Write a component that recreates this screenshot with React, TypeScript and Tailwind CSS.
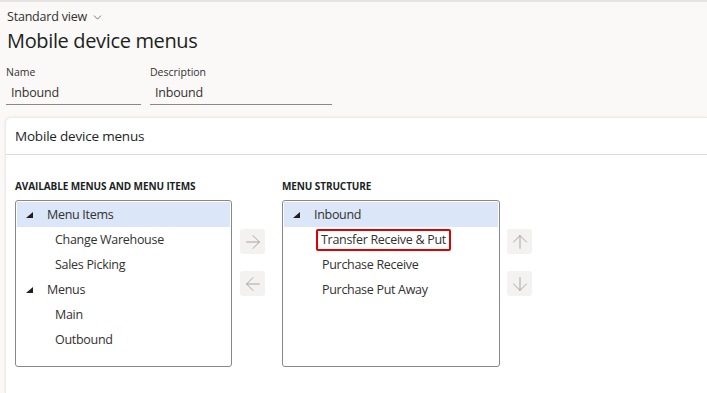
import { ArrowRight, ArrowLeft, ArrowUp, ArrowDown, ChevronDown } from 'lucide-react';

type Row = { label: string; level: 0 | 1; expanded?: boolean; selected?: boolean; marked?: boolean };

const availableRows: Row[] = [
  { label: 'Menu Items', level: 0, expanded: true, selected: true },
  { label: 'Change Warehouse', level: 1 },
  { label: 'Sales Picking', level: 1 },
  { label: 'Menus', level: 0, expanded: true },
  { label: 'Main', level: 1 },
  { label: 'Outbound', level: 1 },
];

const structureRows: Row[] = [
  { label: 'Inbound', level: 0, expanded: true, selected: true },
  { label: 'Transfer Receive & Put', level: 1, marked: true },
  { label: 'Purchase Receive', level: 1 },
  { label: 'Purchase Put Away', level: 1 },
];

const Expander = () => (
  <svg width="7" height="6" viewBox="0 0 7 6" className="shrink-0">
    <polygon points="7,0 7,6 0,6" fill="#201f1e" />
  </svg>
);

const TreeList = ({ rows }: { rows: Row[] }) => (
  <div className="h-[167px] border border-[#8a8886] rounded-[3px] bg-white p-px">
    {rows.map((row) => (
      <div
        key={row.label}
        className={`h-[25px] flex items-center text-[12.5px] tracking-[-0.3px] text-[#323130] ${row.selected ? 'bg-[#dbe6f8]' : ''}`}
      >
        {row.level === 0 ? (
          <>
            <div className="w-[30px] pl-[9px] flex items-center">{row.expanded && <Expander />}</div>
            <span className="pt-[2px]">{row.label}</span>
          </>
        ) : row.marked ? (
          <span className="ml-[32px] h-[22px] px-[3px] pt-[2px] flex items-center border-2 border-[#e00000] rounded-[2px] leading-none">
            {row.label}
          </span>
        ) : (
          <span className="pl-[38px] pt-[2px]">{row.label}</span>
        )}
      </div>
    ))}
  </div>
);

const MoveButton = ({ children }: { children: React.ReactNode }) => (
  <div className="w-[25px] h-[25px] rounded-[3px] bg-[#f3f2f1] flex items-center justify-center text-[#a19f9d]">
    {children}
  </div>
);

const Field = ({ label, value, width }: { label: string; value: string; width: string }) => (
  <div className={`flex flex-col ${width}`}>
    <span className="text-[10.5px] leading-[14px] text-[#323130]">{label}</span>
    <div className="mt-[2px] h-[24px] flex items-center px-[5px] pt-[2px] text-[12.5px] tracking-[-0.2px] text-[#323130] border-b border-[#8a8886]">
      {value}
    </div>
  </div>
);

export default function App() {
  return (
    <div
      className="w-[707px] h-[393px] overflow-hidden bg-[#faf9f8] border-t-2 border-[#e6e4e2] flex flex-col"
      style={{ fontFamily: '"Open Sans", "Noto Sans", sans-serif' }}
    >
      {/* Page header */}
      <div className="pl-[7px] pt-[6px]">
        <div className="flex items-center gap-[4px] text-[12.5px] tracking-[-0.2px] leading-[18px] text-[#323130]">
          Standard view
          <ChevronDown size={13} strokeWidth={1.5} className="text-[#605e5c]" />
        </div>
        <h1 className="mt-[1px] text-[20px] tracking-[-0.35px] leading-[28px] text-[#201f1e]">Mobile device menus</h1>
        <div className="mt-[10px] flex gap-[9px]">
          <Field label="Name" value="Inbound" width="w-[135px] -ml-[1px]" />
          <Field label="Description" value="Inbound" width="w-[182px]" />
        </div>
      </div>

      {/* Card */}
      <div className="mt-[12px] ml-[5px] flex-1 bg-white rounded-tl-[6px] border-l border-t border-[#edebe9] shadow-[0_0_3px_rgba(0,0,0,0.08)]">
        <div className="h-[37px] border-b border-[#dedcda] flex items-center pl-[9px] pt-[1px] text-[13.5px] tracking-[-0.2px] text-[#201f1e]">
          Mobile device menus
        </div>
        <div className="pt-[24px] pl-[9px] flex">
          <div className="w-[217px] flex flex-col">
            <span className="text-[10px] leading-[14px] font-bold tracking-[-0.1px] text-[#201f1e]">AVAILABLE MENUS AND MENU ITEMS</span>
            <div className="mt-[7px]">
              <TreeList rows={availableRows} />
            </div>
          </div>
          <div className="ml-[8px] pt-[50px] flex flex-col gap-[17px]">
            <MoveButton>
              <ArrowRight size={22} strokeWidth={1} />
            </MoveButton>
            <MoveButton>
              <ArrowLeft size={22} strokeWidth={1} />
            </MoveButton>
          </div>
          <div className="ml-[17px] w-[218px] flex flex-col">
            <span className="text-[10px] leading-[14px] font-bold tracking-[-0.1px] text-[#201f1e]">MENU STRUCTURE</span>
            <div className="mt-[7px]">
              <TreeList rows={structureRows} />
            </div>
          </div>
          <div className="ml-[7px] pt-[50px] flex flex-col gap-[17px]">
            <MoveButton>
              <ArrowUp size={22} strokeWidth={1} />
            </MoveButton>
            <MoveButton>
              <ArrowDown size={22} strokeWidth={1} />
            </MoveButton>
          </div>
        </div>
      </div>
    </div>
  );
}
